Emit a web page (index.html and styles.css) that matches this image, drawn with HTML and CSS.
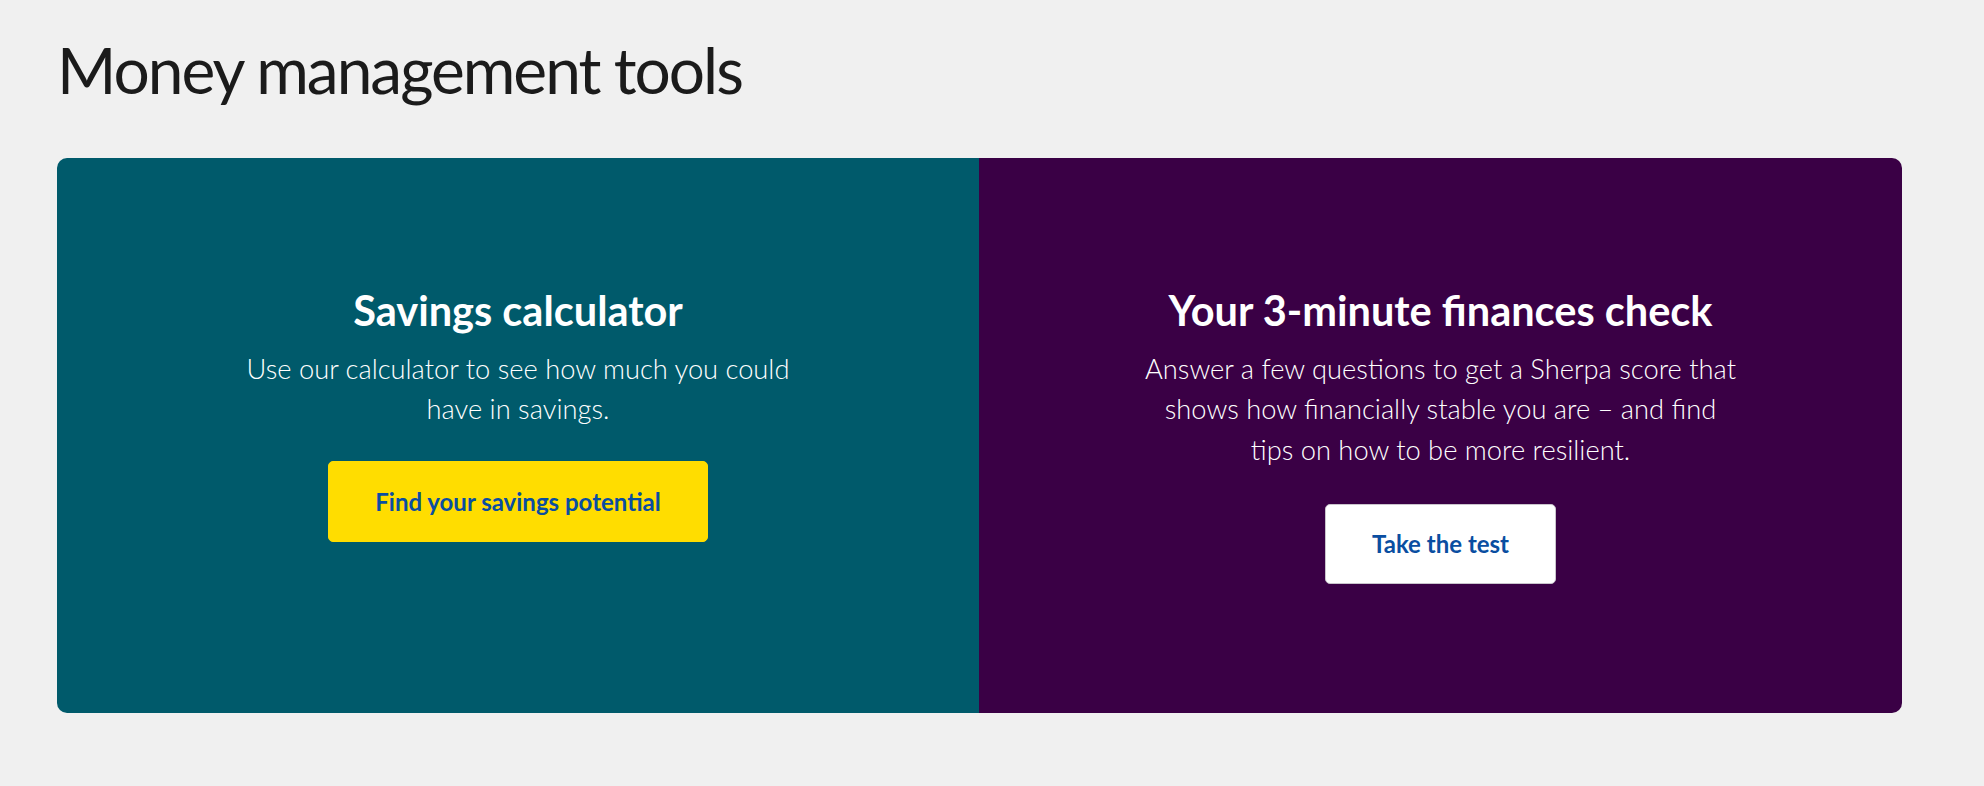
FILE: index.html
```html
<!DOCTYPE html>
<html lang="en">
<head>
<meta charset="utf-8">
<title>Money management tools</title>
<link rel="stylesheet" href="styles.css">
</head>
<body>
<main class="page">
  <h1 class="page-title">Money management tools</h1>
  <section class="tools">
    <div class="tool tool-teal">
      <h2 class="tool-title">Savings calculator</h2>
      <p class="tool-text">Use our calculator to see how much you could<br>have in savings.</p>
      <a class="btn btn-yellow" href="#">Find your savings potential</a>
    </div>
    <div class="tool tool-purple">
      <h2 class="tool-title">Your 3-minute finances check</h2>
      <p class="tool-text">Answer a few questions to get a Sherpa score that<br>shows how financially stable you are – and find<br>tips on how to be more resilient.</p>
      <a class="btn btn-white" href="#">Take the test</a>
    </div>
  </section>
</main>
</body>
</html>
```

FILE: styles.css
```css
* { box-sizing: border-box; }
html, body { margin: 0; padding: 0; }
body {
  background: #f0f0f0;
  font-family: Lato, "Liberation Sans", sans-serif;
  color: #1a1a1a;
}
.page {
  padding: 32px 0 0 57px;
}
.page-title {
  margin: 0 0 49px 0;
  font-size: 64px;
  line-height: 1.2;
  font-weight: 400;
  letter-spacing: -2px;
  color: #1b1b1b;
}
.tools {
  width: 1845px;
  display: grid;
  grid-template-columns: 922px 923px;
  border-radius: 10px;
  overflow: hidden;
}
.tool {
  display: flex;
  flex-direction: column;
  align-items: center;
  text-align: center;
  padding: 128px 40px 129px;
  color: #ffffff;
}
.tool-teal { background: #005a6b; }
.tool-purple { background: #3a0045; }
.tool-title {
  margin: 0 0 13px 0;
  font-size: 41.5px;
  line-height: 1.2;
  font-weight: 700;
}
.tool-text {
  margin: 0 0 34px 0;
  font-size: 27.3px;
  line-height: 40.5px;
  font-weight: 300;
}
.tool-teal .tool-text { margin-bottom: 31px; }
.btn {
  display: inline-block;
  padding: 0 46px;
  height: 80px;
  line-height: 78px;
  border-radius: 5px;
  font-size: 24px;
  font-weight: 700;
  color: #0a4ea1;
  text-decoration: none;
  border: 1px solid transparent;
}
.btn-yellow { background: #ffdd00; border-color: #ffdd00; height: 81px; line-height: 79px; }
.btn-white { background: #ffffff; border-color: #c9c4cc; }
```
